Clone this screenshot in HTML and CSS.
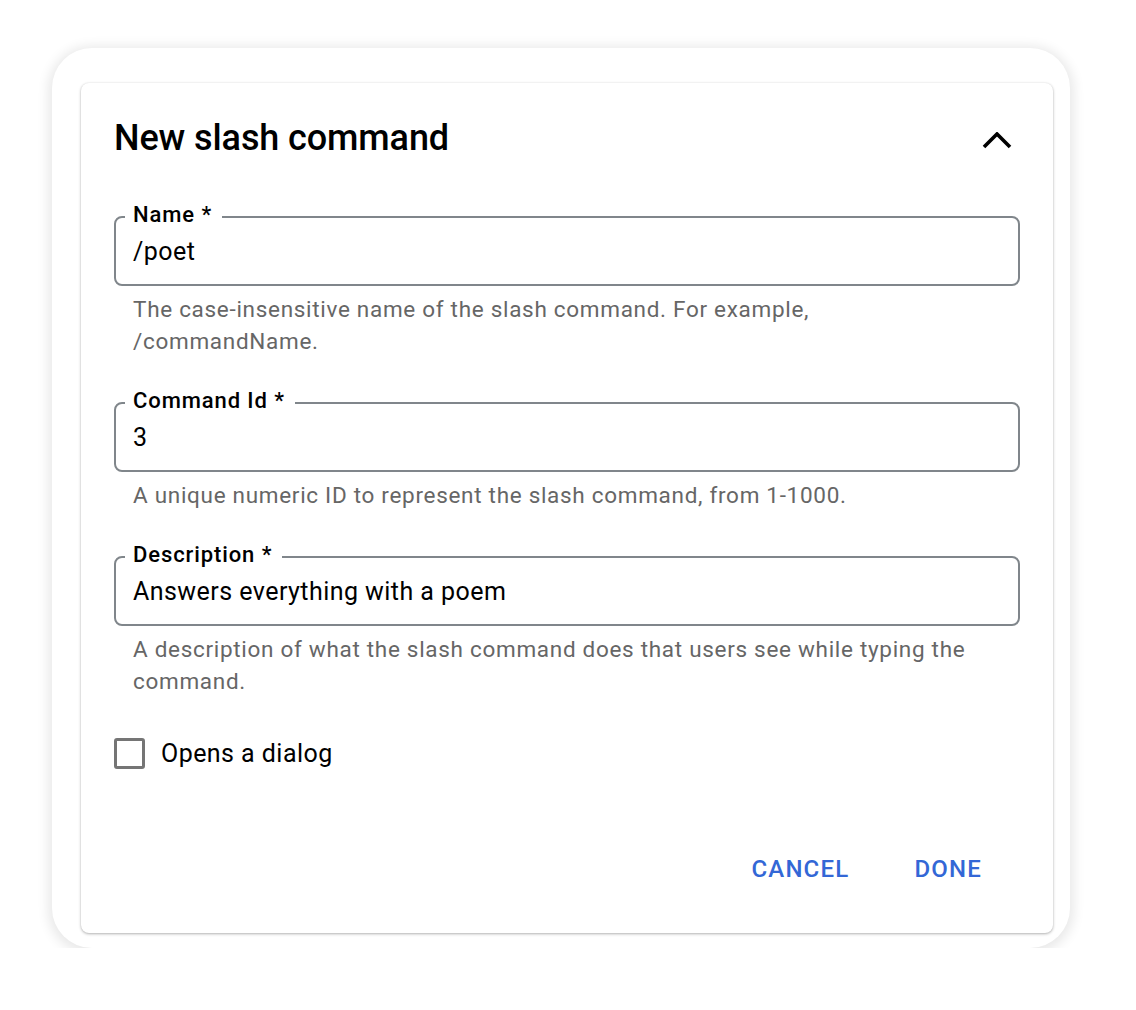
FILE: index.html
```html
<!DOCTYPE html>
<html>
<head>
<meta charset="utf-8">
<link rel="stylesheet" href="styles.css">
</head>
<body>
<div class="frame">
  <div class="card">
    <div class="header">
      <h1 class="title">New slash command</h1>
      <svg class="chevron" width="30" height="20" viewBox="0 0 30 20"><path d="M2 15 L15 2 L28 15" fill="none" stroke="#000" stroke-width="3.6"/></svg>
    </div>
    <div class="field">
      <div class="box"><span class="label">Name *</span><span class="value">/poet</span></div>
      <div class="helper">The case-insensitive name of the slash command. For example, /commandName.</div>
    </div>
    <div class="field">
      <div class="box"><span class="label">Command Id *</span><span class="value">3</span></div>
      <div class="helper">A unique numeric ID to represent the slash command, from 1-1000.</div>
    </div>
    <div class="field">
      <div class="box"><span class="label">Description *</span><span class="value">Answers everything with a poem</span></div>
      <div class="helper">A description of what the slash command does that users see while typing the command.</div>
    </div>
    <div class="check-row">
      <span class="checkbox"></span>
      <span class="check-label">Opens a dialog</span>
    </div>
    <div class="actions">
      <button class="btn">CANCEL</button>
      <button class="btn">DONE</button>
    </div>
  </div>
</div>
</body>
</html>
```

FILE: styles.css
```css
html, body {
  margin: 0;
  padding: 0;
  background: #fff;
  font-family: Roboto, "Liberation Sans", Arial, sans-serif;
  color: #000;
}
.frame {
  margin: 48px 0 0 52px;
  width: 1018px;
  height: 900px;
  box-sizing: border-box;
  border-radius: 40px;
  background: #fff;
  box-shadow: 0 2px 12px 4px rgba(0,0,0,0.09);
  padding: 35px 17px 15px 29px;
}
.card {
  background: #fff;
  border-radius: 8px;
  height: 100%;
  box-sizing: border-box;
  box-shadow: 0 1px 3px rgba(0,0,0,0.3), 0 0 2px rgba(0,0,0,0.06);
  padding: 0 33px 0 33px;
  display: flex;
  flex-direction: column;
}
.header {
  display: flex;
  align-items: center;
  justify-content: space-between;
  height: 110px;
}
.title {
  margin: 0;
  font-size: 36px;
  font-weight: 500;
  letter-spacing: -0.1px;
}
.chevron {
  margin-right: 8px;
  margin-top: 7px;
}
.field {
  margin-top: 23px;
}
.field + .field {
  margin-top: 45px;
}
.box {
  position: relative;
  height: 70px;
  box-sizing: border-box;
  border: 2px solid #80868b;
  border-radius: 8px;
  display: flex;
  align-items: center;
  padding-left: 17px;
}
.label {
  position: absolute;
  left: 9px;
  top: -16px;
  background: #fff;
  padding: 0 10px 0 8px;
  font-size: 22px;
  font-weight: 500;
  letter-spacing: 0.9px;
  line-height: 26px;
}
.value {
  font-size: 25px;
  letter-spacing: 0.45px;
}
.helper {
  margin-top: 7px;
  padding-left: 19px;
  padding-right: 40px;
  font-size: 22.5px;
  letter-spacing: 0.7px;
  line-height: 32px;
  color: #666;
}
.check-row {
  display: flex;
  align-items: center;
  height: 48px;
  margin-top: 32px;
}
.checkbox {
  width: 31px;
  height: 31px;
  box-sizing: border-box;
  border: 3px solid #757575;
  border-radius: 3px;
}
.check-label {
  margin-left: 16px;
  font-size: 25px;
  letter-spacing: 0.45px;
}
.actions {
  margin-top: auto;
  margin-bottom: 46px;
  display: flex;
  justify-content: flex-end;
  gap: 65px;
  padding-right: 38px;
}
.btn {
  border: none;
  background: none;
  padding: 0;
  font-family: Roboto, "Liberation Sans", Arial, sans-serif;
  font-size: 24px;
  font-weight: 500;
  color: #3367d6;
  letter-spacing: 1.2px;
  line-height: 36px;
}
```
